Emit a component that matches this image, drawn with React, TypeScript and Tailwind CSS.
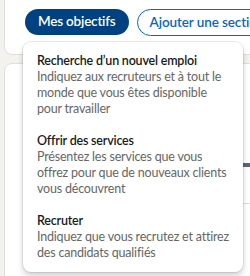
const goals = [
  {
    title: "Recherche d’un nouvel emploi",
    lines: ["Indiquez aux recruteurs et à tout le", "monde que vous êtes disponible", "pour travailler"],
  },
  {
    title: "Offrir des services",
    lines: ["Présentez les services que vous", "offrez pour que de nouveaux clients", "vous découvrent"],
  },
  {
    title: "Recruter",
    lines: ["Indiquez que vous recrutez et attirez", "des candidats qualifiés"],
  },
]

export default function App() {
  return (
    <div className="relative h-[276px] w-[250px] overflow-hidden bg-[#f4f2ee] font-['Lato','Noto_Sans',sans-serif]">
      {/* Profile card (top part, cut off) */}
      <div className="ml-[4px] -mr-[20px] rounded-b-lg border border-t-0 border-[#e0dfdc] bg-white pb-[18px] pl-[20px] pt-[9px]">
        <div className="flex gap-2 whitespace-nowrap">
          <button className="h-[26px] rounded-full bg-[#004182] px-[13px] text-[13.5px] font-semibold leading-none tracking-[-0.2px] text-white">
            Mes objectifs
          </button>
          <button className="h-[27px] rounded-full border border-[#0a66c2] px-[12px] text-[13.5px] font-semibold leading-none tracking-[-0.1px] text-[#0a66c2]">
            Ajouter une section
          </button>
        </div>
      </div>

      {/* Next card, mostly hidden by the menu */}
      <div className="ml-[4px] -mr-[20px] mt-[8px] rounded-lg border border-[#e0dfdc] bg-white pl-[28px] pt-[99px]">
        <div className="h-[4px] w-full bg-[#56687a]" />
        <div className="mt-[2px] h-[34px] whitespace-nowrap text-[14px] font-semibold leading-[16px] text-[#0a66c2]">
          Afficher tous les détails du profil
        </div>
        <div className="h-px w-full bg-[#e0dfdc]" />
        <p className="mt-[27px] text-[14px] leading-[20px] text-[#1a1a1a]">
          Ajoutez des détails à votre profil il vous permettra de trouver plus facilement le profil de votre recherche
        </p>
      </div>

      {/* Dropdown */}
      <div className="absolute left-[23px] top-[42px] w-[220px] rounded-lg bg-white py-[3px] shadow-[0_0_0_1px_rgba(0,0,0,0.08),0_4px_6px_rgba(0,0,0,0.18)]">
        {goals.map((g) => (
          <div key={g.title} className="whitespace-nowrap px-[14px] py-2 text-[12.5px] leading-[16px] tracking-[-0.2px]">
            <div className="font-semibold text-[#1a1a1a]">{g.title}</div>
            {g.lines.map((l) => (
              <div key={l} className="text-[#666666]">
                {l}
              </div>
            ))}
          </div>
        ))}
      </div>
    </div>
  )
}
